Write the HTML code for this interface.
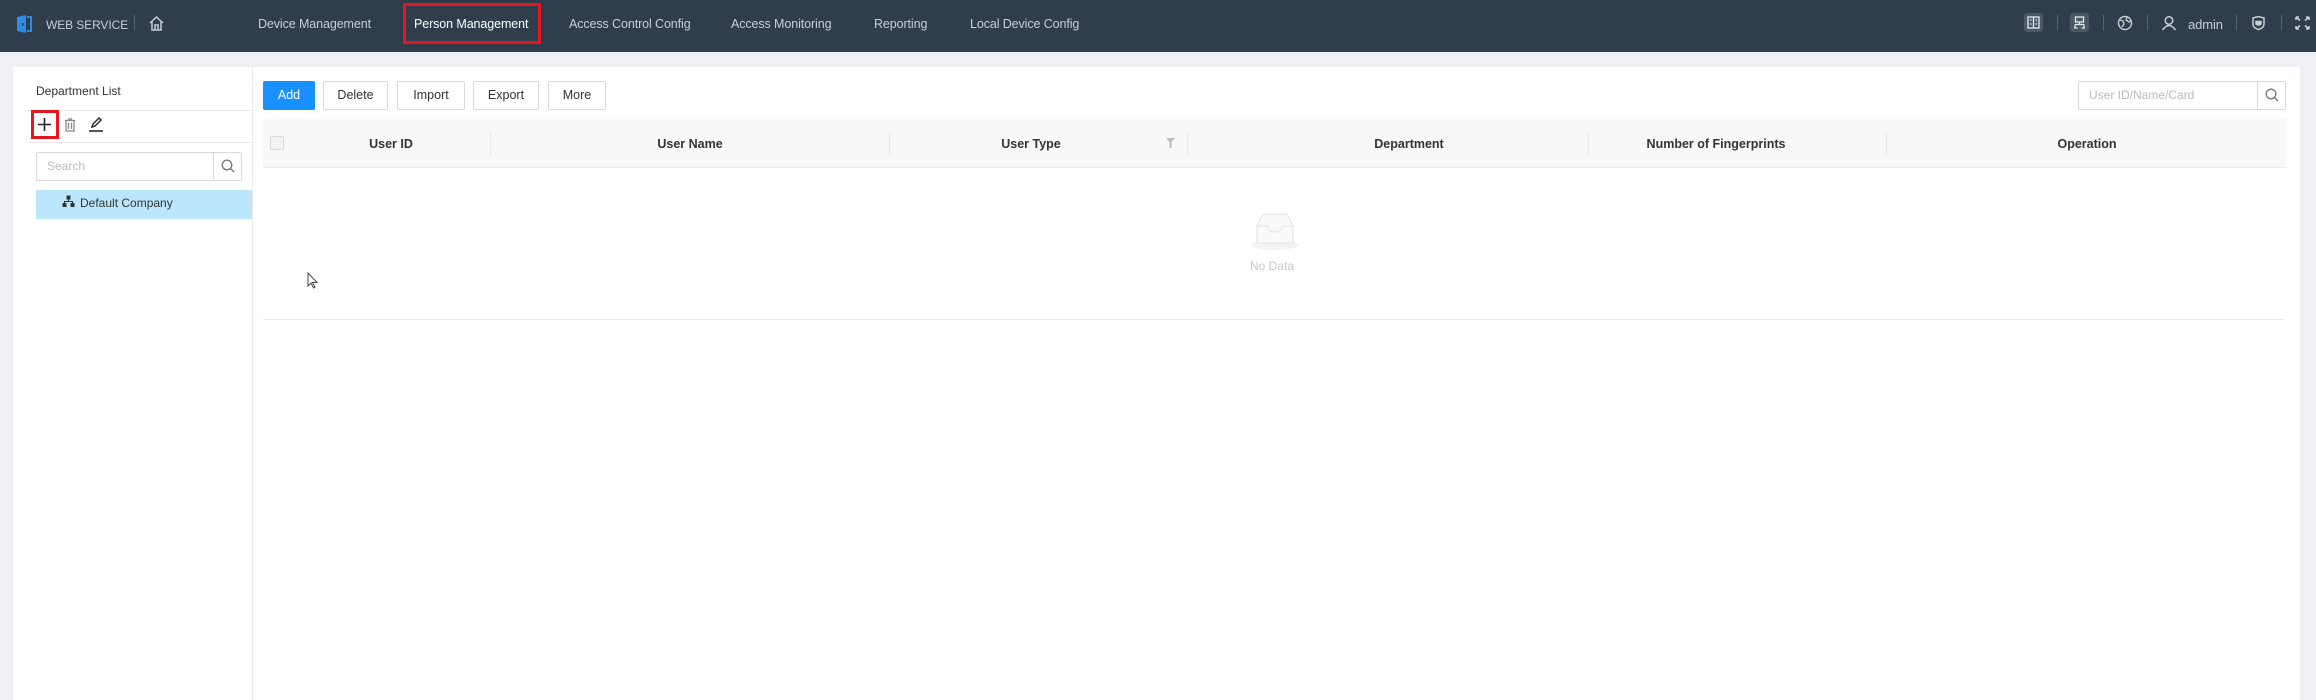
<!DOCTYPE html>
<html><head><meta charset="utf-8"><style>
*{box-sizing:border-box;margin:0;padding:0}
body{width:2316px;height:700px;overflow:hidden;background:#eef0f3;font-family:"Liberation Sans",sans-serif;position:relative;font-size:13px;color:#333}
.hdr{position:absolute;left:0;top:0;width:2316px;height:52px;background:#2f3d4d}
.abs{position:absolute}
.nav{position:absolute;top:17px;color:#c8cdd3;font-size:12.5px;white-space:nowrap;letter-spacing:-0.1px}
.sep{position:absolute;top:15px;width:1px;height:16px;background:#56636f}
.panel{position:absolute;left:13px;top:67px;width:2287px;height:633px;background:#fff}
.btn{position:absolute;top:81px;height:29px;border:1px solid #d9d9d9;border-radius:2px;background:#fff;font-size:12.5px;text-align:center;line-height:27px;color:#333}
.th{position:absolute;top:137px;font-weight:bold;font-size:12.5px;color:#333;transform:translateX(-50%);white-space:nowrap}
.div{position:absolute;top:132px;width:1px;height:24px;background:#e8e8e8}
</style></head><body>
<div class="hdr"></div>
<svg class="abs" style="left:14px;top:14px" width="20" height="20" viewBox="0 0 20 20"><path d="M3 3 L12 1 L12 19 L3 17Z" fill="#2d8ce8"/><path d="M13 3 H17 V17 H13" fill="none" stroke="#2d8ce8" stroke-width="2"/><rect x="8" y="9" width="1.5" height="3" fill="#2f3d4d"/></svg>
<div class="nav" style="left:46px;top:18px;font-size:12px">WEB SERVICE</div>
<div class="sep" style="left:134px"></div>
<svg class="abs" style="left:148px;top:15px" width="17" height="17" viewBox="0 0 17 17" fill="none" stroke="#c8cdd3" stroke-width="1.5"><path d="M2 8 L8.5 2 L15 8 M4 7 V15 H13 V7 M7 15 V10 H10 V15"/></svg>
<div class="nav" style="left:258px">Device Management</div>
<div class="nav" style="left:414px;color:#fff">Person Management</div>
<div class="abs" style="left:403px;top:3px;width:138px;height:41px;border:3px solid #e8141e"></div>
<div class="nav" style="left:569px">Access Control Config</div>
<div class="nav" style="left:731px">Access Monitoring</div>
<div class="nav" style="left:874px">Reporting</div>
<div class="nav" style="left:970px">Local Device Config</div>
<div class="abs" style="left:2024px;top:13px;width:19px;height:19px;background:#4a5867;border-radius:3px"></div>
<svg class="abs" style="left:2027px;top:16px" width="13" height="13" viewBox="0 0 13 13" fill="none" stroke="#e6e9ec" stroke-width="1.3"><rect x="1" y="1" width="11" height="11"/><path d="M6.5 1V12M3 4H4.5M8.5 4H10M3 8H4.5M8.5 8H10"/></svg>
<div class="sep" style="left:2057px"></div>
<div class="abs" style="left:2070px;top:13px;width:19px;height:19px;background:#4a5867;border-radius:3px"></div>
<svg class="abs" style="left:2073px;top:16px" width="13" height="13" viewBox="0 0 13 13" fill="none" stroke="#e6e9ec" stroke-width="1.3"><rect x="2.5" y="1" width="8" height="5"/><path d="M6.5 6V8.5M2 8.5H11M2 8.5V12M11 8.5V12M1 12H4.5M8.5 12H12"/></svg>
<div class="sep" style="left:2103px"></div>
<svg class="abs" style="left:2117px;top:15px" width="16" height="16" viewBox="0 0 16 16" fill="none" stroke="#c8cdd3" stroke-width="1.4"><circle cx="8" cy="8" r="6.5"/><path d="M3 5 L6 6 L7 9 L5 12 M10 2.5 L9 5 L12 7 L13.5 6"/></svg>
<div class="sep" style="left:2147px"></div>
<svg class="abs" style="left:2161px;top:15px" width="16" height="16" viewBox="0 0 16 16" fill="none" stroke="#c8cdd3" stroke-width="1.5"><circle cx="8" cy="5.5" r="3.8"/><path d="M1.5 15 Q8 6 14.5 15"/></svg>
<div class="nav" style="left:2188px;font-size:13px">admin</div>
<div class="sep" style="left:2236px"></div>
<svg class="abs" style="left:2251px;top:15px" width="15" height="16" viewBox="0 0 15 16" fill="none" stroke="#c8cdd3" stroke-width="1.5"><path d="M2 3 L7.5 1.5 L13 3 V9 Q13 13 7.5 14.5 Q2 13 2 9Z"/><path d="M5 6.5H10V9Q7.5 11 5 9Z" fill="#c8cdd3"/></svg>
<div class="sep" style="left:2281px"></div>
<svg class="abs" style="left:2295px;top:16px" width="15" height="14" viewBox="0 0 15 14" fill="none" stroke="#c8cdd3" stroke-width="1.6"><path d="M1 1 L5 4.5 M1 1 V4 M1 1 H4 M14 1 L10 4.5 M14 1 V4 M14 1 H11 M1 13 L5 9.5 M1 13 V10 M1 13 H4 M14 13 L10 9.5 M14 13 V10 M14 13 H11"/></svg>

<div class="panel"></div>
<div class="abs" style="left:252px;top:67px;width:1px;height:633px;background:#ebebeb"></div>
<div class="abs" style="left:36px;top:84px;font-size:12px;color:#333">Department List</div>
<div class="abs" style="left:27px;top:110px;width:225px;height:1px;background:#e8e8e8"></div>
<div class="abs" style="left:31px;top:110px;width:28px;height:29px;border:3px solid #e8141e"></div>
<svg class="abs" style="left:37px;top:117px" width="15" height="15" viewBox="0 0 15 15" stroke="#222" stroke-width="1.6"><path d="M7.5 1V14M1 7.5H14"/></svg>
<svg class="abs" style="left:64px;top:118px" width="12" height="14" viewBox="0 0 12 14" fill="none" stroke="#888" stroke-width="1.3"><path d="M1 2.5H11M4.5 2.5V1H7.5V2.5M2 2.5V13H10V2.5M4.5 5V11M7.5 5V11"/></svg>
<svg class="abs" style="left:88px;top:117px" width="16" height="15" viewBox="0 0 16 15" fill="none" stroke="#222" stroke-width="1.4"><path d="M4 10 L5 7 L11 1 L13 3 L7 9 Z M1 14H15"/></svg>
<div class="abs" style="left:27px;top:142px;width:225px;height:1px;background:#e8e8e8"></div>
<div class="abs" style="left:36px;top:152px;width:206px;height:29px;border:1px solid #d9d9d9;border-radius:2px"></div>
<div class="abs" style="left:213px;top:152px;width:1px;height:29px;background:#d9d9d9"></div>
<div class="abs" style="left:47px;top:159px;color:#bbb;font-size:12px">Search</div>
<svg class="abs" style="left:221px;top:159px" width="14" height="14" viewBox="0 0 14 14" fill="none" stroke="#777" stroke-width="1.3"><circle cx="6" cy="6" r="4.8"/><path d="M9.5 9.5L13 13"/></svg>
<div class="abs" style="left:36px;top:190px;width:216px;height:29px;background:#bce6fb"></div>
<svg class="abs" style="left:62px;top:195px" width="13" height="13" viewBox="0 0 13 13" fill="#333"><rect x="4.5" y="0.5" width="4" height="4"/><rect x="0.5" y="8" width="4" height="4"/><rect x="8.5" y="8" width="4" height="4"/><path d="M6.5 4.5V6.5M2.5 8V6.5H10.5V8" stroke="#333" fill="none"/></svg>
<div class="abs" style="left:80px;top:196px;font-size:12px;color:#333">Default Company</div>
<svg class="abs" style="left:307px;top:272px" width="12" height="17" viewBox="0 0 12 17"><path d="M1 1 L1 14 L4 11 L6.5 16 L8 15.3 L5.6 10.5 L10 10.5Z" fill="#fff" stroke="#444" stroke-width="1"/></svg>

<div class="btn" style="left:263px;width:52px;background:#1890ff;border-color:#1890ff;color:#fff">Add</div>
<div class="btn" style="left:323px;width:65px">Delete</div>
<div class="btn" style="left:397px;width:68px">Import</div>
<div class="btn" style="left:473px;width:66px">Export</div>
<div class="btn" style="left:548px;width:58px">More</div>
<div class="abs" style="left:2078px;top:81px;width:208px;height:29px;border:1px solid #d9d9d9;border-radius:2px"></div>
<div class="abs" style="left:2257px;top:81px;width:1px;height:29px;background:#d9d9d9"></div>
<div class="abs" style="left:2089px;top:88px;color:#bbb;font-size:12px">User ID/Name/Card</div>
<svg class="abs" style="left:2265px;top:88px" width="14" height="14" viewBox="0 0 14 14" fill="none" stroke="#777" stroke-width="1.3"><circle cx="6" cy="6" r="4.8"/><path d="M9.5 9.5L13 13"/></svg>

<div class="abs" style="left:263px;top:119px;width:2023px;height:49px;background:#f8f8f8;border-bottom:1px solid #ebebeb"></div>
<div class="abs" style="left:270px;top:136px;width:14px;height:14px;border:1px solid #d9d9d9;border-radius:2px;background:#f3f3f3"></div>
<div class="th" style="left:391px">User ID</div>
<div class="div" style="left:490px"></div>
<div class="th" style="left:690px">User Name</div>
<div class="div" style="left:889px"></div>
<div class="th" style="left:1031px">User Type</div>
<svg class="abs" style="left:1166px;top:138px" width="9" height="10" viewBox="0 0 9 10" fill="#bbb"><path d="M0 0H9L5.5 4V10H3.5V4Z"/></svg>
<div class="div" style="left:1187px"></div>
<div class="th" style="left:1409px">Department</div>
<div class="div" style="left:1588px"></div>
<div class="th" style="left:1716px">Number of Fingerprints</div>
<div class="div" style="left:1886px"></div>
<div class="th" style="left:2087px">Operation</div>
<svg class="abs" style="left:1249px;top:212px" width="52" height="38" viewBox="0 0 52 38"><ellipse cx="26" cy="33" rx="24" ry="5" fill="#f3f3f3"/><path d="M8 14 L14 2 H38 L44 14 V31 H8Z" fill="#fafafa" stroke="#e3e3e3"/><path d="M8 14 H19 Q19 20 26 20 Q33 20 33 14 H44" fill="none" stroke="#e3e3e3"/></svg>
<div class="abs" style="left:1250px;top:259px;color:#c8c8c8;font-size:12px">No Data</div>
<div class="abs" style="left:263px;top:319px;width:2023px;height:1px;background:#ebebeb"></div>
</body></html>
